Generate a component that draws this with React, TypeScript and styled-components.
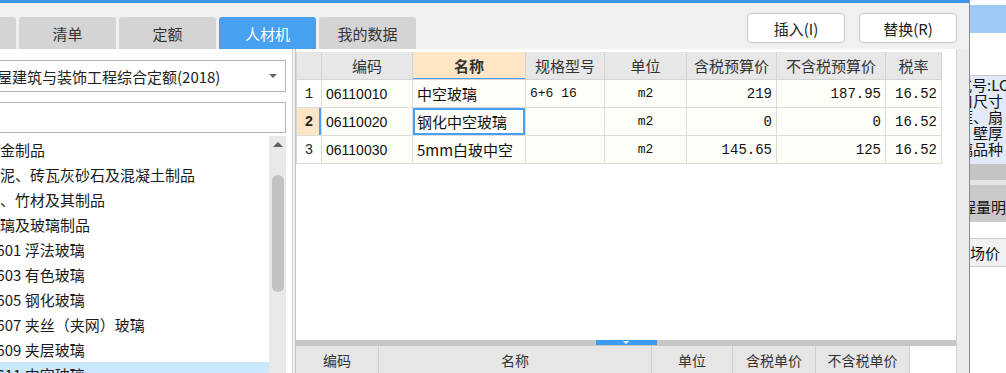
import styled, { createGlobalStyle } from "styled-components";

const cjk = `"Noto Sans CJK SC", "Noto Sans", sans-serif`;
const latin = `"Liberation Sans", "Noto Sans CJK SC", sans-serif`;
const mono = `"Liberation Mono", "Noto Sans CJK SC", monospace`;

type Align = "left" | "center" | "right";
type Face = "cjk" | "latin" | "mono";

const faces: Record<Face, string> = { cjk, latin, mono };
const sizes: Record<Face, number> = { cjk: 15, latin: 14, mono: 14 };

interface Material {
  code: string;
  name: string;
  spec: string;
  unit: string;
  taxed: string;
  untaxed: string;
  rate: string;
}

interface Column {
  key: keyof Material;
  title: string;
  width: number;
  align: Align;
  face: Face;
  size?: number;
}

// top grid
const columns: Column[] = [
  { key: "code", title: "编码", width: 91, align: "left", face: "latin" },
  { key: "name", title: "名称", width: 113, align: "left", face: "cjk" },
  { key: "spec", title: "规格型号", width: 79, align: "left", face: "mono", size: 13 },
  { key: "unit", title: "单位", width: 82, align: "center", face: "mono", size: 13 },
  { key: "taxed", title: "含税预算价", width: 90, align: "right", face: "mono" },
  { key: "untaxed", title: "不含税预算价", width: 109, align: "right", face: "mono" },
  { key: "rate", title: "税率", width: 56, align: "right", face: "mono" },
];

const materials: Material[] = [
  { code: "06110010", name: "中空玻璃", spec: "6+6 16", unit: "m2", taxed: "219", untaxed: "187.95", rate: "16.52" },
  { code: "06110020", name: "钢化中空玻璃", spec: "", unit: "m2", taxed: "0", untaxed: "0", rate: "16.52" },
  { code: "06110030", name: "5mm白玻中空", spec: "", unit: "m2", taxed: "145.65", untaxed: "125", rate: "16.52" },
];

const gridCols = `25px ${columns.map((c) => `${c.width}px`).join(" ")}`;

// bottom grid header
const detailColumns = [
  { title: "编码", width: 83 },
  { title: "名称", width: 273 },
  { title: "单位", width: 81 },
  { title: "含税单价", width: 83 },
  { title: "不含税单价", width: 94 },
];

const tabs = ["清单指引", "清单", "定额", "人材机", "我的数据"];

const tree = [
  { label: "五金制品", depth: 0 },
  { label: "水泥、砖瓦灰砂石及混凝土制品", depth: 0 },
  { label: "木、竹材及其制品", depth: 0 },
  { label: "玻璃及玻璃制品", depth: 0 },
  { label: "0601 浮法玻璃", depth: 1 },
  { label: "0603 有色玻璃", depth: 1 },
  { label: "0605 钢化玻璃", depth: 1 },
  { label: "0607 夹丝（夹网）玻璃", depth: 1 },
  { label: "0609 夹层玻璃", depth: 1 },
  { label: "0611 中空玻璃", depth: 1, selected: true },
];

const sideLines = [
  { text: "式号:LC", shift: -13 },
  { text: "洞口尺寸", shift: -27 },
  { text: "框、扇", shift: -12 },
  { text: "壁厚", shift: 3 },
  { text: "璃品种", shift: -12 },
];

const App = () => {
  return (
    <>
      <GlobalStyle />
      <Page>
        <Dialog>
          <Toolbar>
            <TabBar>
              {tabs.map((t) => (
                <Tab key={t} $active={t === "人材机"}>
                  {t}
                </Tab>
              ))}
            </TabBar>
            <ActionBar>
              <ActionButton>插入(I)</ActionButton>
              <ActionButton>替换(R)</ActionButton>
            </ActionBar>
          </Toolbar>

          <Body>
            <LeftPanel>
              <Select>
                <SelectText>房屋建筑与装饰工程综合定额(2018)</SelectText>
                <Caret />
              </Select>
              <SearchBox />
              <TreeArea>
                <TreeList>
                  {tree.map((item) => (
                    <TreeItem key={item.label} $selected={!!item.selected}>
                      <TreeLabel $shift={item.depth === 0 ? -15 : -12}>{item.label}</TreeLabel>
                    </TreeItem>
                  ))}
                </TreeList>
                <ScrollTrack>
                  <ScrollArrow />
                  <ScrollThumb />
                </ScrollTrack>
              </TreeArea>
            </LeftPanel>

            <MainPanel>
              <GridArea>
                <GridRow $cols={gridCols} $height={28}>
                  <HeadCell />
                  {columns.map((c) => (
                    <HeadCell key={c.key} $active={c.key === "name"}>
                      {c.title}
                    </HeadCell>
                  ))}
                </GridRow>
                {materials.map((m, i) => {
                  const current = i === 1;
                  return (
                    <GridRow key={m.code} $cols={gridCols} $height={28}>
                      <IndexCell $current={current}>{i + 1}</IndexCell>
                      {columns.map((c) => (
                        <Cell
                          key={c.key}
                          $align={c.align}
                          $face={c.face}
                          $size={c.size}
                          $selected={current && c.key === "name"}
                        >
                          {m[c.key]}
                        </Cell>
                      ))}
                    </GridRow>
                  );
                })}
              </GridArea>
              <Splitter>
                <SplitHandle />
              </Splitter>
              <DetailHeader>
                {detailColumns.map((c) => (
                  <DetailHeadCell key={c.title} $width={c.width}>
                    {c.title}
                  </DetailHeadCell>
                ))}
              </DetailHeader>
            </MainPanel>
            <Gutter />
          </Body>
        </Dialog>

        <SidePanel>
          <SideTitle />
          <SideInfo>
            {sideLines.map((l) => (
              <SideLine key={l.text} $shift={l.shift}>
                {l.text}
              </SideLine>
            ))}
          </SideInfo>
          <SideBand />
          <SideStrip />
          <SideSection>
            <SideLine $shift={-24}>工程量明细</SideLine>
          </SideSection>
          <SideCell>
            <SideLine $shift={-15}>市场价</SideLine>
          </SideCell>
        </SidePanel>
      </Page>
    </>
  );
};

// #region styled-components

const GlobalStyle = createGlobalStyle`
  * { box-sizing: border-box; }
  html, body { margin: 0; padding: 0; }
  body {
    width: 1006px;
    height: 373px;
    overflow: hidden;
    background: #f0f0f0;
    font-family: ${cjk};
    color: #222;
  }
`;

const Page = styled.div`
  display: flex;
  width: 1006px;
  height: 373px;
  overflow: hidden;
`;

const Dialog = styled.section`
  width: 969px;
  flex-shrink: 0;
  display: flex;
  flex-direction: column;
  background: #f0f0f0;
  border-top: 3px solid #3a95ea;
`;

const Toolbar = styled.div`
  height: 46px;
  display: flex;
  justify-content: space-between;
  padding-right: 12px;
`;

const TabBar = styled.div`
  display: flex;
  gap: 3px;
  margin-left: -81px;
  align-self: flex-end;
`;

const Tab = styled.div<{ $active?: boolean }>`
  width: 97px;
  height: 32px;
  display: flex;
  align-items: center;
  justify-content: center;
  border-radius: 3px 3px 0 0;
  background: ${(p) => (p.$active ? "#47a0f0" : "#d4d4d4")};
  color: ${(p) => (p.$active ? "#fff" : "#333")};
  font-size: 15px;
  white-space: nowrap;
`;

const ActionBar = styled.div`
  display: flex;
  gap: 14px;
  margin-top: 10px;
  align-self: flex-start;
`;

const ActionButton = styled.button`
  width: 98px;
  height: 30px;
  padding: 0;
  background: #fff;
  border: 1px solid #c6c6c6;
  border-radius: 4px;
  font-family: ${cjk};
  font-size: 15px;
  color: #222;
`;

const Body = styled.div`
  flex: 1;
  display: flex;
  min-height: 0;
`;

const LeftPanel = styled.div`
  width: 293px;
  margin-right: 2px;
  flex-shrink: 0;
  display: flex;
  flex-direction: column;
  padding-top: 11px;
  background: #fff;
  border-right: 1px solid #d8d8d8;
  overflow: hidden;
`;

const Select = styled.div`
  width: 288px;
  height: 32px;
  margin-left: -2px;
  display: flex;
  align-items: center;
  justify-content: space-between;
  padding-right: 8px;
  border: 1px solid #b4b4b4;
  background: #fff;
  overflow: hidden;
`;

const SelectText = styled.span`
  margin-left: -17px;
  font-size: 15px;
  color: #222;
  white-space: nowrap;
`;

const Caret = styled.span`
  width: 0;
  height: 0;
  border-left: 4px solid transparent;
  border-right: 4px solid transparent;
  border-top: 4px solid #666;
`;

const SearchBox = styled.div`
  width: 288px;
  height: 31px;
  margin-left: -2px;
  margin-top: 10px;
  border: 1px solid #b4b4b4;
  background: #fff;
`;

const TreeArea = styled.div`
  flex: 1;
  display: flex;
  margin-top: 3px;
  padding-right: 6px;
  min-height: 0;
`;

const TreeList = styled.ul`
  flex: 1;
  margin: 0;
  padding: 1px 0 0;
  list-style: none;
  overflow: hidden;
`;

const TreeItem = styled.li<{ $selected: boolean }>`
  height: 25px;
  display: flex;
  align-items: center;
  background: ${(p) => (p.$selected ? "#cce8ff" : "transparent")};
  overflow: hidden;
`;

const TreeLabel = styled.span<{ $shift: number }>`
  margin-left: ${(p) => p.$shift}px;
  font-size: 15px;
  color: #1a1a1a;
  white-space: nowrap;
`;

const ScrollTrack = styled.div`
  width: 17px;
  flex-shrink: 0;
  display: flex;
  flex-direction: column;
  align-items: center;
  background: #e9e9e9;
`;

const ScrollArrow = styled.span`
  margin-top: 6px;
  width: 0;
  height: 0;
  border-left: 5px solid transparent;
  border-right: 5px solid transparent;
  border-bottom: 5px solid #606060;
`;

const ScrollThumb = styled.span`
  margin-top: 28px;
  width: 12px;
  height: 117px;
  border-radius: 6px;
  background: #c2c2c2;
`;

const MainPanel = styled.div`
  width: 662px;
  flex-shrink: 0;
  display: flex;
  flex-direction: column;
  background: #fff;
  border-left: 1px solid #c8c8c8;
  border-right: 1px solid #cfcfcf;
`;

const GridArea = styled.div`
  height: 291px;
  padding-top: 3px;
  flex-shrink: 0;
`;

const GridRow = styled.div<{ $cols: string; $height: number }>`
  display: grid;
  grid-template-columns: ${(p) => p.$cols};
  height: ${(p) => p.$height}px;
  width: max-content;
  border-left: 1px solid #d6d6d6;
`;

const HeadCell = styled.div<{ $active?: boolean }>`
  display: flex;
  align-items: center;
  justify-content: center;
  background: ${(p) => (p.$active ? "#fde5c6" : "#e7e7e7")};
  border-right: 1px solid #d4d4d4;
  border-bottom: 1px solid #d4d4d4;
  box-shadow: ${(p) => (p.$active ? "inset 0 -1px 0 #4a9ff5" : "none")};
  font-size: 15px;
  font-weight: ${(p) => (p.$active ? 700 : 400)};
  color: #333;
  white-space: nowrap;
`;

const IndexCell = styled.div<{ $current: boolean }>`
  display: flex;
  align-items: center;
  justify-content: center;
  background: ${(p) => (p.$current ? "#fde5c6" : "#fff")};
  border-right: 1px solid #dcdcdc;
  border-bottom: 1px solid #dcdcdc;
  box-shadow: ${(p) => (p.$current ? "inset -2px 0 0 #4a9ff5" : "none")};
  font-family: ${mono};
  font-size: 14px;
  font-weight: ${(p) => (p.$current ? 700 : 400)};
  color: #222;
`;

const Cell = styled.div<{ $align: Align; $face: Face; $size?: number; $selected?: boolean }>`
  display: flex;
  align-items: center;
  justify-content: ${(p) =>
    p.$align === "right" ? "flex-end" : p.$align === "center" ? "center" : "flex-start"};
  padding: 0 4px;
  background: #fffffa;
  border-right: 1px solid #dcdcdc;
  border-bottom: 1px solid #dcdcdc;
  box-shadow: ${(p) => (p.$selected ? "inset 0 0 0 2px #4a9ff5" : "none")};
  font-family: ${(p) => faces[p.$face]};
  font-size: ${(p) => p.$size ?? sizes[p.$face]}px;
  color: #111;
  white-space: pre;
  overflow: hidden;
`;

const Splitter = styled.div`
  height: 6px;
  flex-shrink: 0;
  display: flex;
  justify-content: center;
  background: #c6c6c6;
`;

const SplitHandle = styled.div`
  width: 61px;
  height: 5px;
  display: flex;
  justify-content: center;
  align-items: center;
  background: #3d9bf0;

  &::after {
    content: "";
    border-left: 3px solid transparent;
    border-right: 3px solid transparent;
    border-top: 3px solid #fff;
  }
`;

const DetailHeader = styled.div`
  display: flex;
  height: 28px;
  flex-shrink: 0;
`;

const DetailHeadCell = styled.div<{ $width: number }>`
  width: ${(p) => p.$width}px;
  display: flex;
  align-items: center;
  justify-content: center;
  background: #e6e6e6;
  border-right: 1px solid #cfcfcf;
  font-size: 14px;
  color: #333;
  white-space: nowrap;
`;

const Gutter = styled.div`
  flex: 1;
  background: #ececec;
`;

const SidePanel = styled.aside`
  flex: 1;
  display: flex;
  flex-direction: column;
  background: #fff;
  border-left: 1px solid #8a8a8a;
  overflow: hidden;
  font-size: 15px;
  line-height: 16px;
  color: #111;
`;

const SideTitle = styled.div`
  height: 28px;
  margin-top: 5px;
  background: #9dcbf5;
`;

const SideInfo = styled.div`
  height: 89px;
  margin-top: 42px;
  padding-top: 1px;
  background: #e1eaf6;
  border-top: 1px solid #c9c9c9;
`;

const SideLine = styled.div<{ $shift: number }>`
  margin-left: ${(p) => p.$shift}px;
  white-space: nowrap;
`;

const SideBand = styled.div`
  height: 16px;
  background: #c4c4c4;
`;

const SideStrip = styled.div`
  height: 5px;
  background: #e4e4e4;
`;

const SideSection = styled.div`
  height: 37px;
  padding-top: 14px;
  background: #c9c9c9;
`;

const SideCell = styled.div`
  height: 29px;
  margin-top: 16px;
  display: flex;
  align-items: center;
  background: #f1f1f1;
  border-top: 1px solid #cbcbcb;
  border-bottom: 1px solid #cbcbcb;
`;

// #endregion

export default App;
